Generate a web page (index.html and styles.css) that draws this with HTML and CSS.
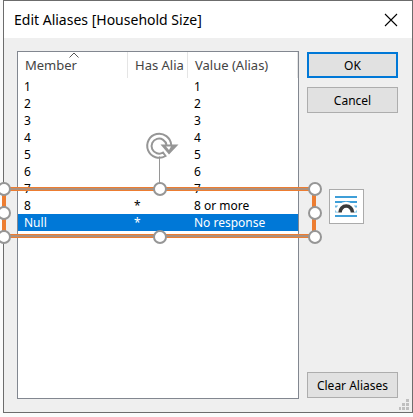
FILE: index.html
```html
<!DOCTYPE html>
<html lang="en">
<head>
<meta charset="utf-8">
<title>Edit Aliases [Household Size]</title>
<link rel="stylesheet" href="styles.css">
</head>
<body>
<main class="dialog">
  <header class="titlebar">
    <h1 class="title">Edit Aliases [Household Size]</h1>
    <button class="close" type="button" aria-label="Close">
      <svg width="14" height="14" viewBox="0 0 14 14"><path d="M1 1L13 13M13 1L1 13" stroke="#000" stroke-width="1.1" fill="none"/></svg>
    </button>
  </header>
  <div class="content">
    <div class="list">
      <table class="members">
        <colgroup><col class="col-member"><col class="col-flag"><col class="col-value"></colgroup>
        <thead>
          <tr>
            <th scope="col">Member<svg class="sort" width="10" height="6" viewBox="0 0 10 6"><path d="M0.5 5.5L5 1L9.5 5.5" stroke="#555" fill="none"/></svg></th>
            <th scope="col">Has Alia</th>
            <th scope="col">Value (Alias)</th>
          </tr>
        </thead>
        <tbody>
          <tr><td>1</td><td></td><td>1</td></tr>
          <tr><td>2</td><td></td><td>2</td></tr>
          <tr><td>3</td><td></td><td>3</td></tr>
          <tr><td>4</td><td></td><td>4</td></tr>
          <tr><td>5</td><td></td><td>5</td></tr>
          <tr><td>6</td><td></td><td>6</td></tr>
          <tr><td>7</td><td></td><td>7</td></tr>
          <tr><td>8</td><td>*</td><td>8 or more</td></tr>
          <tr class="selected"><td>Null</td><td>*</td><td>No response</td></tr>
        </tbody>
      </table>
    </div>
    <div class="actions">
      <button class="button primary" type="button">OK</button>
      <button class="button" type="button">Cancel</button>
      <button class="button last" type="button">Clear Aliases</button>
    </div>
  </div>
  <svg class="grip" width="10" height="11" viewBox="0 0 10 11" fill="#bfbfbf"><path d="M7 0h3v3h-3zM3 4h3v3h-3zM7 4h3v3h-3zM0 8h2v3h-2zM3 8h3v3h-3zM7 8h3v3h-3z"/></svg>
</main>
<svg class="selection" width="324" height="116" viewBox="0 0 324 116">
  <g fill="none">
    <rect x="4" y="59" width="310" height="47" stroke="#ed7d31" stroke-width="4"/>
    <path d="M4 59H314M4 106H314" stroke="#969696" stroke-width="1.4"/>
    <path d="M159.5 18V54" stroke="#969696"/>
  </g>
  <g fill="#fff" stroke="#969696" stroke-width="2">
    <circle cx="4" cy="59" r="6"/><circle cx="160" cy="59" r="6"/><circle cx="315" cy="59" r="6"/>
    <circle cx="4" cy="83" r="6"/><circle cx="315" cy="83" r="6"/>
    <circle cx="4" cy="107" r="6"/><circle cx="160" cy="107" r="6"/><circle cx="315" cy="107" r="6"/>
  </g>
  <circle cx="159.500" cy="16.500" r="10" fill="#fff"/>
  <g fill="none" stroke="#969696" stroke-width="2">
    <path d="M171.200 15A12 12 0 1 0 165.500 26L163 22.500A7.500 7.500 0 1 1 166.500 15"/>
  </g>
  <path d="M160.500 14.500H178.500L169 24.500Z" fill="#969696"/>
  <path d="M166 16.500H171L169 20Z" fill="#fff"/>
</svg>
<button class="layout-options" type="button" aria-label="Layout Options">
  <svg width="23" height="23" viewBox="0 0 23 23" fill="none">
    <path d="M0 2H22M0 7H22M0 21H22" stroke="#3f9fd8" stroke-width="2"/>
    <path d="M0 11.500H3M19 11.500H22M0 16.500H3M19 16.500H22" stroke="#6bb7e2" stroke-width="2"/>
    <path d="M4 17C5 8 17 8 18 17" stroke="#fff" stroke-width="7"/>
    <path d="M5 17.500A6.200 6.400 0 0 1 17.500 17.500" stroke="#3a3a3a" stroke-width="3.600"/>
  </svg>
</button>
</body>
</html>
```
FILE: styles.css
```css
* { box-sizing: border-box; }

body {
  margin: 0;
  padding: 0 0 4px 3px;
  height: 100vh;
  display: flex;
  position: relative;
  overflow: hidden;
  background: #fbfbfb;
  color: #000;
  font: 12px/17px "Noto Sans", sans-serif;
}

.dialog {
  flex: 1;
  display: flex;
  flex-direction: column;
  position: relative;
  border: 1px solid #6c6c6c;
  background: #efefef;
}

.titlebar {
  display: flex;
  align-items: center;
  justify-content: space-between;
  height: 37px;
  padding: 0 14px 0 10px;
  background: #fff;
}

.title {
  margin: 0;
  font: 14px/20px "Noto Sans", sans-serif;
}

.close {
  display: flex;
  padding: 0;
  border: 0;
  background: none;
}

.content {
  flex: 1;
  display: flex;
  gap: 8px;
  padding: 13px 14px 13px 13px;
}

.list {
  flex: 1;
  border: 1px solid #828790;
  background: #fff;
}

.members {
  width: 100%;
  table-layout: fixed;
  border-collapse: collapse;
}

.col-member { width: 110px; }
.col-flag { width: 60px; }

th {
  position: relative;
  height: 26px;
  padding: 0 0 0 7px;
  text-align: left;
  white-space: nowrap;
  font-size: 13px;
  font-weight: 400;
  color: #444;
  box-shadow: inset -1px 0 #e5e5e5;
}

td {
  height: 17px;
  padding: 0 0 0 6px;
  line-height: 17px;
}

.sort {
  position: absolute;
  left: 51px;
  top: 0;
}

.selected {
  background: #0078d7;
  color: #fff;
}

.actions {
  width: 91px;
  display: flex;
  flex-direction: column;
  gap: 9px;
  padding: 1px 0;
}

.button {
  height: 26px;
  padding: 0;
  border: 1px solid #adadad;
  background: #e1e1e1;
  color: #000;
  font: inherit;
}

.primary { border: 2px solid #0078d7; }

.last { margin-top: auto; }

.grip {
  position: absolute;
  right: 3px;
  bottom: 2px;
}

.selection {
  position: absolute;
  left: 0;
  top: 130px;
}

.layout-options {
  position: absolute;
  left: 329px;
  top: 189px;
  width: 35px;
  height: 35px;
  display: grid;
  place-items: center;
  padding: 0;
  border: 1px solid #ababab;
  background: #fff;
}
```
